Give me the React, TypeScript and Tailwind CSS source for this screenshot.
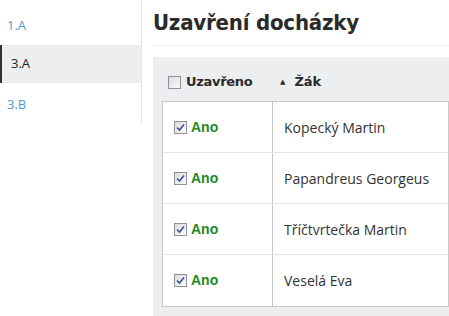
import React from "react";

function Box({ checked }: { checked?: boolean }) {
  return (
    <span className="inline-flex h-[13px] w-[13px] shrink-0 items-center justify-center border border-[#8f8f9d] bg-gradient-to-br from-[#dcdcdc] to-[#fbfbfb]">
      {checked && (
        <svg width="9" height="9" viewBox="0 0 9 9">
          <path d="M1 4.5 L3.5 7 L8 1.5" fill="none" stroke="#3b4fa0" strokeWidth="1.6" />
        </svg>
      )}
    </span>
  );
}

const rows = ["Kopecký Martin", "Papandreus Georgeus", "Tříčtvrtečka Martin", "Veselá Eva"];

export default function App() {
  return (
    <div className="flex h-[316px] w-[449px] items-start overflow-hidden bg-white" style={{ fontFamily: '"Open Sans", sans-serif' }}>
      <div className="flex w-[142px] shrink-0 flex-col border-r border-[#e3e3e3] pt-[7px] text-[13px]">
        <div className="flex h-[38px] shrink-0 items-center pl-[7px] text-[#4b9bd1]">1.A</div>
        <div className="flex h-[38px] shrink-0 items-center border-l-[2px] border-[#333] bg-[#eceeef] pl-[9px] text-[#222]">3.A</div>
        <div className="h-[40px] shrink-0 pl-[7px] pt-[12px] leading-[18px] text-[#4b9bd1]">3.B</div>
      </div>
      <div className="flex h-full min-w-0 flex-1 flex-col pl-[11px]">
        <div className="h-[46px] shrink-0 border-b border-[#eeeeee] pt-[9px]">
          <h1 className="text-[22px] font-bold leading-[28px] text-[#2a2a2a]" style={{ fontFamily: '"DejaVu Sans Condensed", "DejaVu Sans", sans-serif', letterSpacing: "-0.2px" }}>
            Uzavření docházky
          </h1>
        </div>
        <div className="mt-[11px] flex-1 bg-[#eceeef] pl-[9px] pr-0">
          <div className="flex h-[44px] items-center pt-[6px] text-[13px] font-bold text-[#2a2a2a]" style={{ fontFamily: '"DejaVu Sans", sans-serif' }}>
            <div className="flex w-[110px] items-center gap-[5px] pl-[6px]">
              <Box />
              <span className="tracking-[-0.3px]">Uzavřeno</span>
            </div>
            <div className="flex items-center gap-[9px] pl-[8px]">
              <span className="text-[7px]">▲</span>
              <span>Žák</span>
            </div>
          </div>
          <div className="border border-[#c9c9c9] bg-white">
            {rows.map((name, i) => (
              <div key={name} className={`flex h-[51px] items-center ${i < rows.length - 1 ? "border-b border-[#e5e5e5]" : ""}`}>
                <div className="flex h-full w-[110px] items-center gap-[4px] border-r border-[#c9c9c9] pl-[11px]">
                  <Box checked />
                  <span className="text-[14px] font-bold text-[#1e8a1e]" style={{ fontFamily: '"Liberation Sans", sans-serif' }}>Ano</span>
                </div>
                <div className="pl-[11px] text-[14px] text-[#333]">{name}</div>
              </div>
            ))}
          </div>
        </div>
      </div>
    </div>
  );
}
